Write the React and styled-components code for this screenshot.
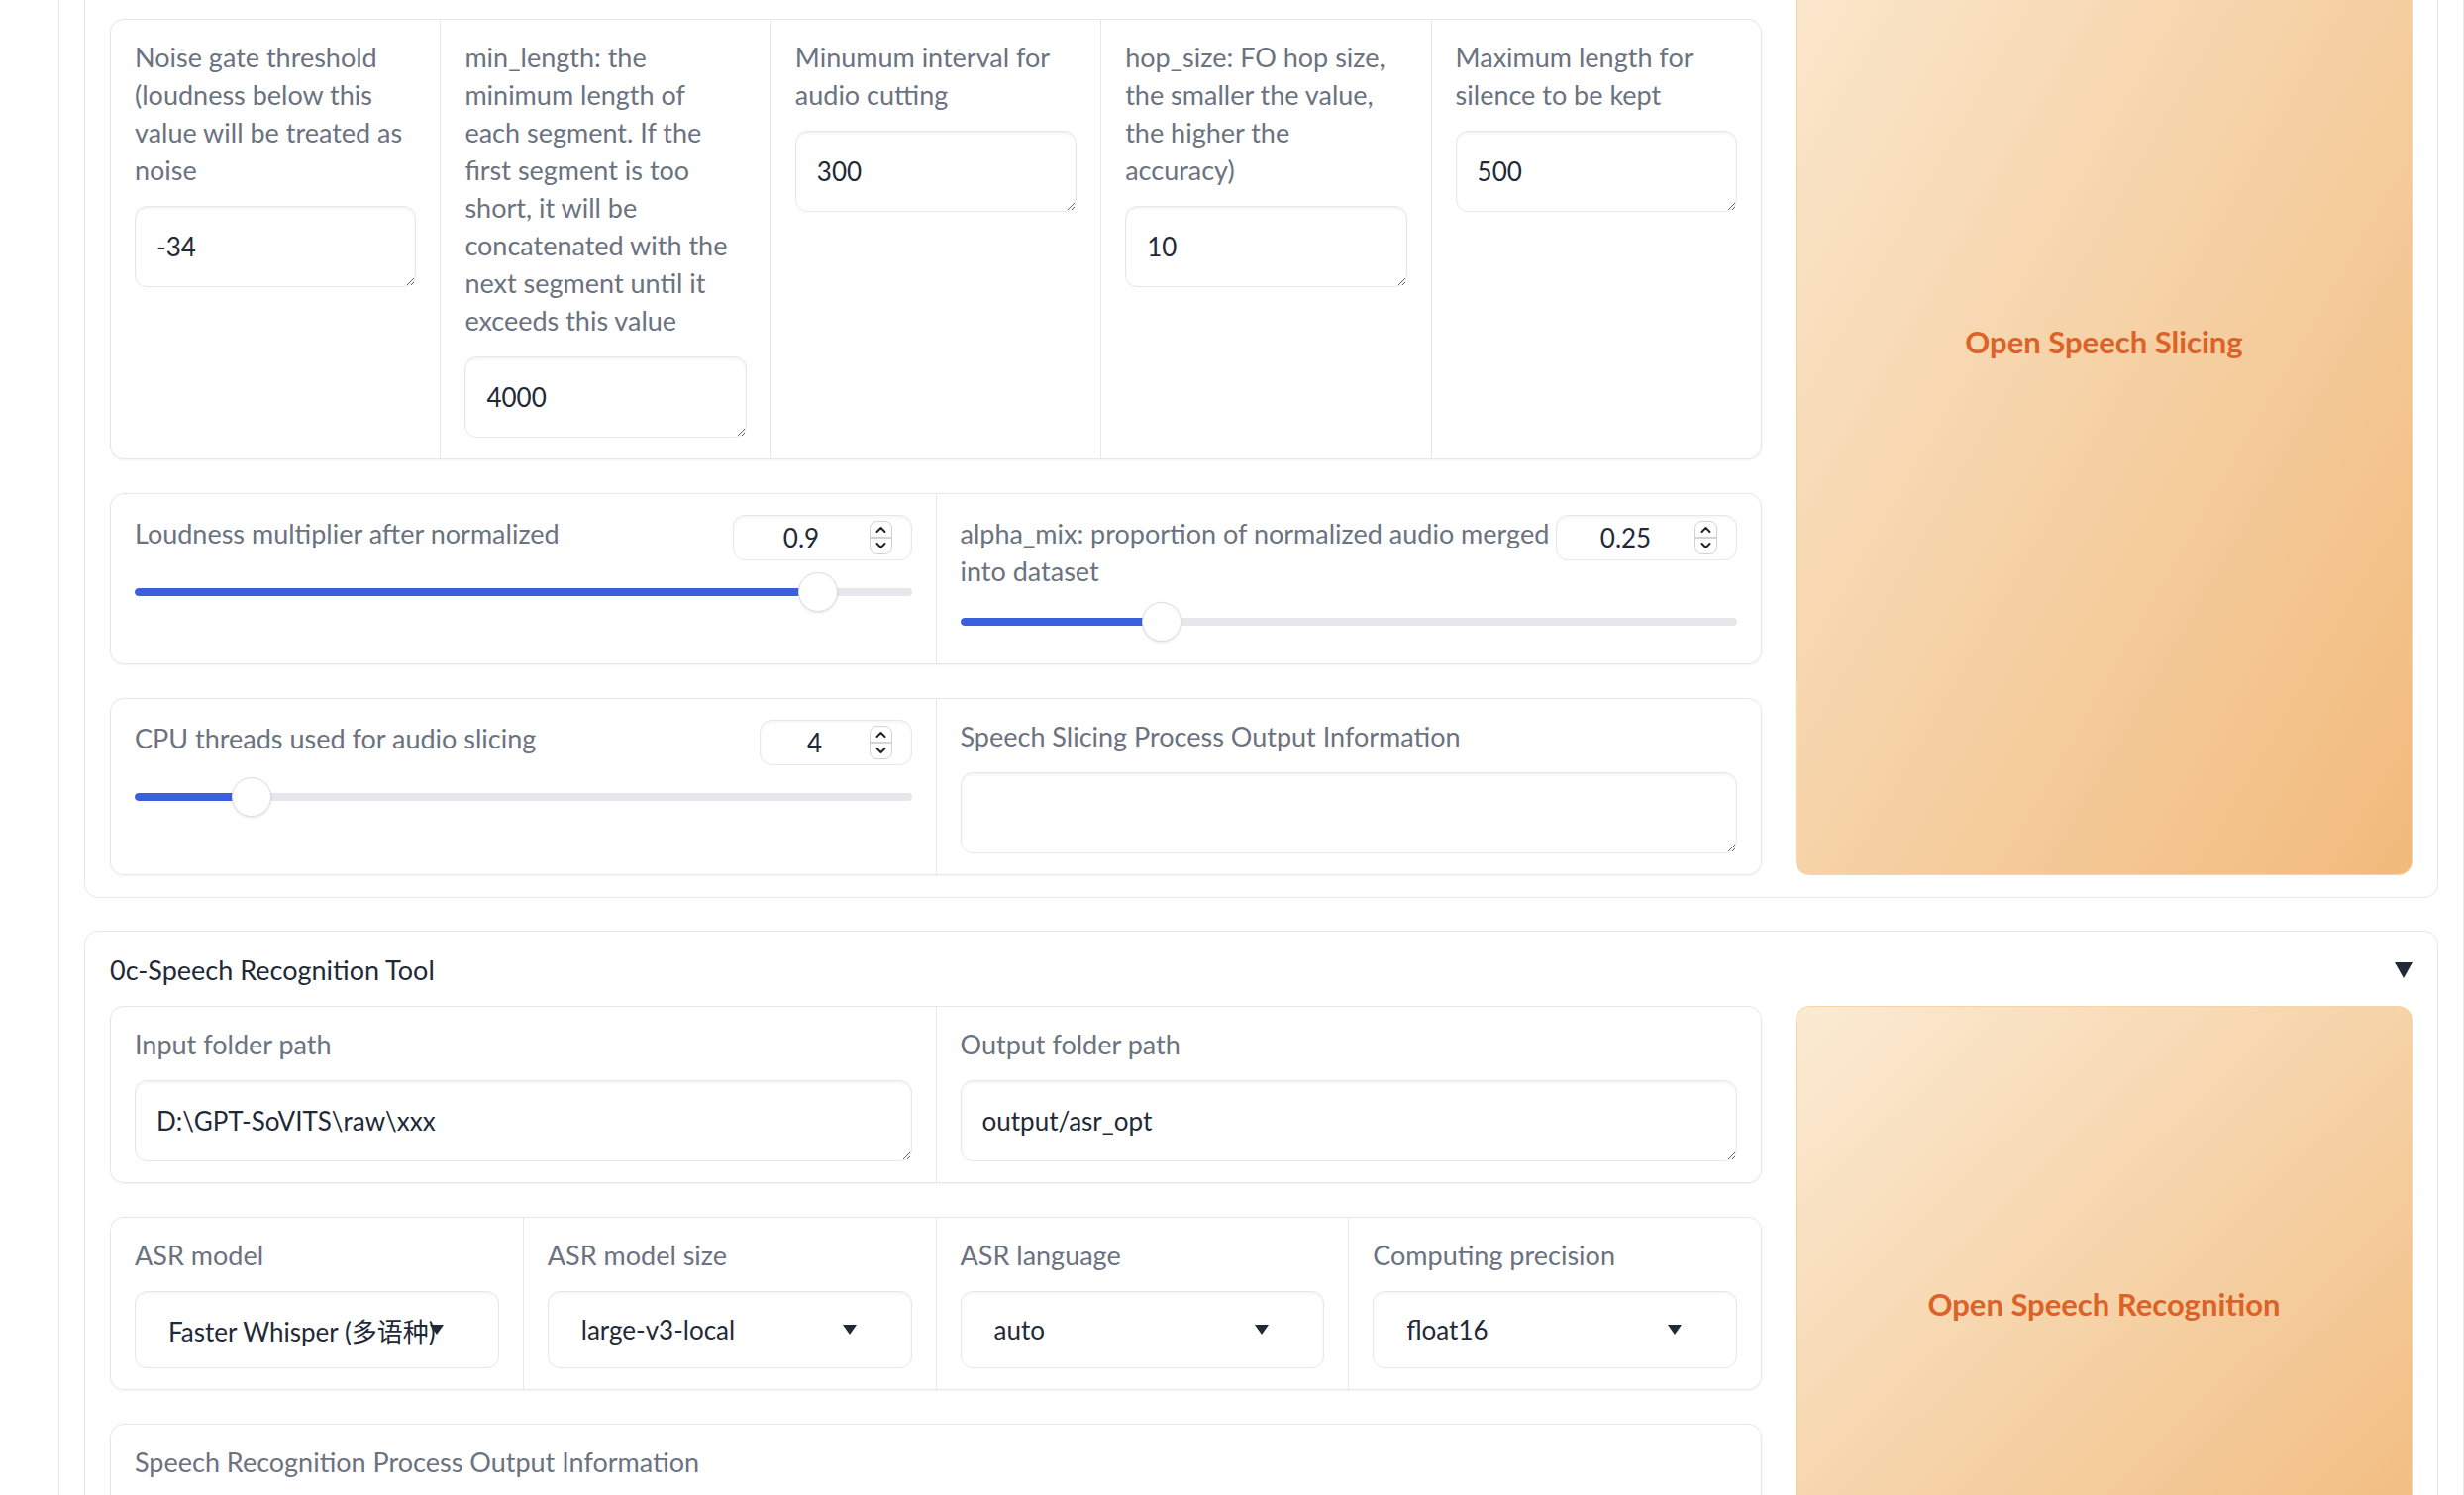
import React from 'react';
import styled, { createGlobalStyle } from 'styled-components';

const Global = createGlobalStyle`
  html, body { margin: 0; padding: 0; background: #ffffff; overflow: hidden; }
  body { font-family: Lato, "Noto Sans", "Noto Sans CJK SC", sans-serif; }
  *, *::before, *::after { box-sizing: border-box; }
`;

const Viewport = styled.div`
  width: 2488px;
  height: 1510px;
  overflow: hidden;
  padding-left: 59px;
`;

const Panel = styled.div`
  margin-top: -300px;
  border-left: 1px solid #e5e7eb;
  border-right: 1px solid #e5e7eb;
  padding: 30px 25px 0 25px;
  display: flex;
  flex-direction: column;
  gap: 33px;
`;

const Block = styled.section`
  border: 1px solid #e5e7eb;
  border-radius: 14px;
  background: #fff;
  padding: 19px 25px 22px;
`;

const Header = styled.div`
  display: flex;
  align-items: center;
  justify-content: space-between;
  height: 38px;
  margin-bottom: 18px;
  font-size: 27px;
  color: #1f2937;
`;

const Content = styled.div`
  display: grid;
  grid-template-columns: minmax(0, 1fr) 623px;
  gap: 34px;
`;

const Column = styled.div`
  display: flex;
  flex-direction: column;
  gap: 34px;
`;

const Group = styled.div`
  display: grid;
  grid-template-columns: repeat(${p => p.$cols}, minmax(0, 1fr));
  gap: 1px;
  background: #e5e7eb;
  border: 1px solid #e5e7eb;
  border-radius: 14px;
  overflow: hidden;
  box-shadow: 0 1px 3px rgba(0, 0, 0, 0.05);
`;

const Cell = styled.div`
  background: #fff;
  padding: ${p => (p.$slider ? '21px 24px 22px' : '19px 24px 21px')};
  display: flex;
  flex-direction: column;
  min-width: 0;
`;

const Label = styled.div`
  font-size: 27px;
  line-height: 38px;
  color: #6b7280;
  margin-bottom: ${p => (p.$flush ? '0' : '17px')};
  padding-right: ${p => (p.$flush ? '0' : '5px')};
  flex: ${p => (p.$flush ? '1 1 auto' : '0 0 auto')};
  min-width: 0;
`;

const TextArea = styled.textarea`
  display: block;
  width: 100%;
  height: 82px;
  resize: vertical;
  border: 1px solid #e5e7eb;
  border-radius: 12px;
  padding: 21px 21px;
  font-family: inherit;
  font-size: 26px;
  line-height: 38px;
  color: #1f2937;
  background: #fff;
  box-shadow: inset 0 2px 3px rgba(0, 0, 0, 0.05);
  outline: none;
`;

const SliderHead = styled.div`
  display: flex;
  align-items: flex-start;
  justify-content: space-between;
  margin-bottom: 12px;
`;

const NumberBox = styled.div`
  flex: 0 0 auto;
  width: ${p => p.$w}px;
  height: 46px;
  border: 1px solid #e5e7eb;
  border-radius: 12px;
  box-shadow: inset 0 2px 3px rgba(0, 0, 0, 0.04);
  display: flex;
  align-items: center;
  padding-right: 19px;
  font-size: 26px;
  color: #1f2937;
`;

const NumberValue = styled.span`
  flex: 1;
  text-align: center;
`;

const Track = styled.div`
  position: relative;
  height: 40px;
  display: flex;
  align-items: center;
`;

const Bar = styled.div`
  position: relative;
  width: 100%;
  height: 8px;
  border-radius: 4px;
  background: #e5e7eb;
  overflow: hidden;
`;

const Fill = styled.div`
  height: 100%;
  background: #3a60e0;
  border-radius: 4px 0 0 4px;
`;

const Thumb = styled.div`
  position: absolute;
  top: 0;
  width: 40px;
  height: 40px;
  margin-left: -20px;
  border-radius: 50%;
  background: #fff;
  border: 1px solid #dcdde1;
  box-shadow: 0 1px 3px rgba(0, 0, 0, 0.1);
`;

const Select = styled.div`
  position: relative;
  height: 78px;
  border: 1px solid #e5e7eb;
  border-radius: 12px;
  background: #fff;
  box-shadow: inset 0 2px 3px rgba(0, 0, 0, 0.04);
  padding: 0 51px 0 33px;
  display: flex;
  align-items: center;
  font-size: 26px;
  color: #1f2937;
`;

const SelectText = styled.span`
  white-space: nowrap;
  overflow: hidden;
  flex: 1;
  min-width: 0;
`;

const Caret = styled.svg`
  position: absolute;
  right: 55px;
  top: 50%;
  margin-top: -5px;
`;

const BigButton = styled.button`
  border: 1px solid #f8d3a4;
  border-radius: 14px;
  background: linear-gradient(to bottom right, #fbebd3, #f1ba7c);
  color: #dc6228;
  font-family: inherit;
  font-weight: 700;
  font-size: 31px;
  display: flex;
  align-items: center;
  justify-content: center;
  padding: 0;
  cursor: pointer;
`;

const Spinner = () => (
  <svg width="23" height="34" viewBox="0 0 23 34">
    <rect x="0.5" y="0.5" width="22" height="33" rx="7" fill="#fff" stroke="#cfd1d6" />
    <line x1="1" y1="17" x2="22" y2="17" stroke="#d3d5da" strokeWidth="2" />
    <polyline points="7.5,11 11.5,7 15.5,11" fill="none" stroke="#222" strokeWidth="2" strokeLinecap="round" strokeLinejoin="round" />
    <polyline points="7.5,23 11.5,27 15.5,23" fill="none" stroke="#222" strokeWidth="2" strokeLinecap="round" strokeLinejoin="round" />
  </svg>
);

const Triangle = () => (
  <svg width="18" height="17" viewBox="0 0 18 17">
    <polygon points="0,1 18,1 9,17" fill="#1f2937" />
  </svg>
);

const TextField = ({ label, value }) => (
  <Cell>
    <Label>{label}</Label>
    <TextArea defaultValue={value} rows={1} />
  </Cell>
);

const SliderField = ({ label, value, width, pct }) => (
  <Cell $slider>
    <SliderHead>
      <Label $flush>{label}</Label>
      <NumberBox $w={width}>
        <NumberValue>{value}</NumberValue>
        <Spinner />
      </NumberBox>
    </SliderHead>
    <Track>
      <Bar>
        <Fill style={{ width: `${pct}%` }} />
      </Bar>
      <Thumb style={{ left: `${pct}%` }} />
    </Track>
  </Cell>
);

const SelectField = ({ label, value }) => (
  <Cell>
    <Label>{label}</Label>
    <Select>
      <SelectText>{value}</SelectText>
      <Caret width="14" height="10" viewBox="0 0 14 10">
        <polygon points="0,0 14,0 7,10" fill="#1f2937" />
      </Caret>
    </Select>
  </Cell>
);

export default function App() {
  return (
    <>
      <Global />
      <Viewport>
        <Panel>
          <Block>
            <Header>
              <span>0b-Audio Slicing Tool</span>
              <Triangle />
            </Header>
            <Content>
              <Column>
                <Group $cols={2}>
                  <TextField label="Audio slicer input (file or folder)" value="" />
                  <TextField label="Audio slicer output folder" value="output/slicer_opt" />
                </Group>
                <Group $cols={5}>
                  <TextField label="Noise gate threshold (loudness below this value will be treated as noise" value="-34" />
                  <TextField label="min_length: the minimum length of each segment. If the first segment is too short, it will be concatenated with the next segment until it exceeds this value" value="4000" />
                  <TextField label="Minumum interval for audio cutting" value="300" />
                  <TextField label="hop_size: FO hop size, the smaller the value, the higher the accuracy)" value="10" />
                  <TextField label="Maximum length for silence to be kept" value="500" />
                </Group>
                <Group $cols={2}>
                  <SliderField label="Loudness multiplier after normalized" value="0.9" width={181} pct={88} />
                  <SliderField label="alpha_mix: proportion of normalized audio merged into dataset" value="0.25" width={183} pct={26} />
                </Group>
                <Group $cols={2}>
                  <SliderField label="CPU threads used for audio slicing" value="4" width={154} pct={15} />
                  <TextField label="Speech Slicing Process Output Information" value="" />
                </Group>
              </Column>
              <BigButton>Open Speech Slicing</BigButton>
            </Content>
          </Block>

          <Block>
            <Header>
              <span>0c-Speech Recognition Tool</span>
              <Triangle />
            </Header>
            <Content>
              <Column>
                <Group $cols={2}>
                  <TextField label="Input folder path" value={'D:\\GPT-SoVITS\\raw\\xxx'} />
                  <TextField label="Output folder path" value="output/asr_opt" />
                </Group>
                <Group $cols={4}>
                  <SelectField label="ASR model" value="Faster Whisper (多语种)" />
                  <SelectField label="ASR model size" value="large-v3-local" />
                  <SelectField label="ASR language" value="auto" />
                  <SelectField label="Computing precision" value="float16" />
                </Group>
                <Group $cols={1}>
                  <TextField label="Speech Recognition Process Output Information" value="" />
                </Group>
              </Column>
              <BigButton>Open Speech Recognition</BigButton>
            </Content>
          </Block>
        </Panel>
      </Viewport>
    </>
  );
}
